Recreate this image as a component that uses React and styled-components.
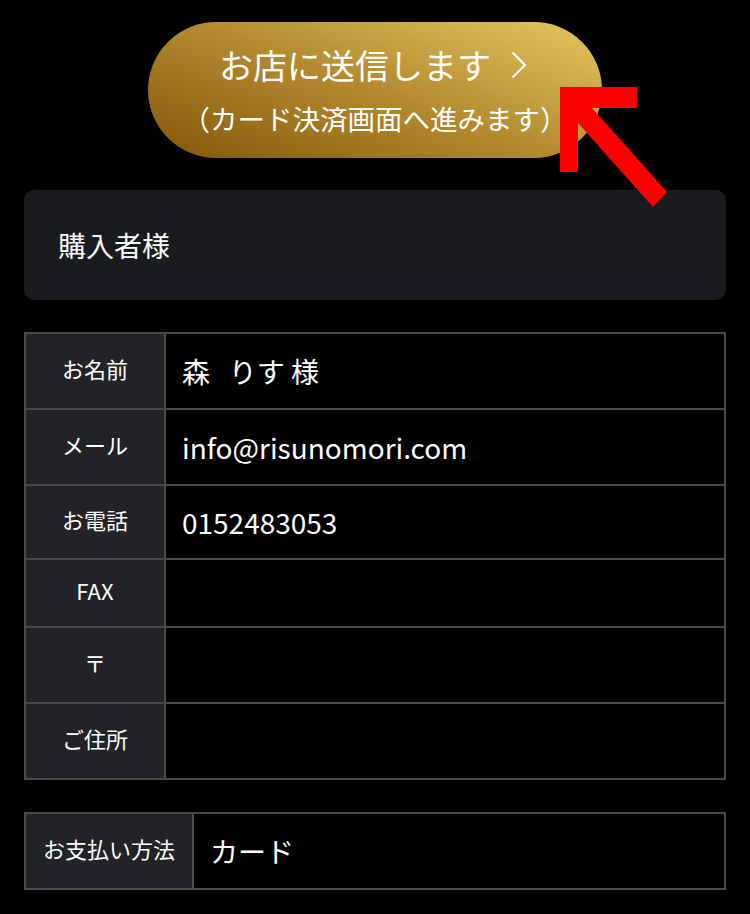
import styled, { createGlobalStyle } from 'styled-components';

const GlobalStyle = createGlobalStyle`
  html, body {
    margin: 0;
    padding: 0;
    background: #000;
  }
  body {
    font-family: 'Noto Sans CJK JP', 'Noto Sans', sans-serif;
    color: #fff;
  }
`;

const Page = styled.div`
  position: relative;
  width: 750px;
  box-sizing: border-box;
  padding: 22px 24px 25px;
  display: flex;
  flex-direction: column;
  gap: 32px;
`;

const SubmitButton = styled.button`
  align-self: center;
  width: 454px;
  height: 136px;
  border: none;
  border-radius: 68px;
  background: linear-gradient(20deg, #845709 0%, #b48a30 50%, #e5c75f 100%);
  color: #fff;
  font-family: inherit;
  display: flex;
  flex-direction: column;
  align-items: center;
  justify-content: center;
  gap: 15px;
  padding: 0 0 2px;
  cursor: pointer;
`;

const ButtonMain = styled.span`
  display: flex;
  align-items: center;
  font-size: 34px;
  line-height: 42px;
  margin-left: -4px;
  svg {
    margin-left: 20px;
  }
`;

const ButtonSub = styled.span`
  font-size: 27.5px;
  line-height: 34px;
`;

const Arrow = styled.svg`
  position: absolute;
  left: 0;
  top: 0;
  pointer-events: none;
`;

const SectionCard = styled.div`
  height: 110px;
  box-sizing: border-box;
  background: #1a1b1f;
  border-radius: 10px;
  padding: 0 34px;
  display: flex;
  align-items: center;
  font-size: 28px;
`;

const Table = styled.table`
  width: 100%;
  border-collapse: collapse;
  border: 2px solid #4a4a4a;
`;

const Row = styled.tr`
  height: ${(p) => p.$h}px;
`;

const Label = styled.th`
  width: ${(p) => (p.$auto ? '1%' : '20%')};
  white-space: nowrap;
  background: #212327;
  border: 2px solid #4a4a4a;
  font-weight: 400;
  font-size: 22px;
  text-align: center;
  vertical-align: middle;
  padding: 0 17px 7px;
`;

const Value = styled.td`
  border: 2px solid #4a4a4a;
  font-size: 28px;
  vertical-align: middle;
  padding: 0 16px;
`;

const buyer = [
  { label: 'お名前', value: '森\u00a0\u00a0\u00a0りす 様', h: 76 },
  { label: 'メール', value: 'info@risunomori.com', h: 76 },
  { label: 'お電話', value: '0152483053', h: 74 },
  { label: 'FAX', value: '', h: 68 },
  { label: '〒', value: '', h: 76 },
  { label: 'ご住所', value: '', h: 76 },
];

export default function App() {
  return (
    <>
      <GlobalStyle />
      <Page>
        <SubmitButton>
          <ButtonMain>
            お店に送信します
            <svg width="16" height="28" viewBox="0 0 16 28">
              <polyline
                points="1.5,1.5 14,14 1.5,26.5"
                fill="none"
                stroke="#fff"
                strokeWidth="2.2"
              />
            </svg>
          </ButtonMain>
          <ButtonSub>（カード決済画面へ進みます）</ButtonSub>
        </SubmitButton>

        <SectionCard>購入者様</SectionCard>

        <Table>
          <tbody>
            {buyer.map((r) => (
              <Row key={r.label} $h={r.h}>
                <Label>{r.label}</Label>
                <Value>{r.value}</Value>
              </Row>
            ))}
          </tbody>
        </Table>

        <Table>
          <tbody>
            <Row $h={76}>
              <Label $auto>お支払い方法</Label>
              <Value>カード</Value>
            </Row>
          </tbody>
        </Table>

        <Arrow width="750" height="220" viewBox="0 0 750 220">
          <polygon
            fill="#ff0000"
            points="560,87 637,87 637,108 592,108 667,192 653,207 578,123 578,172 560,172"
          />
        </Arrow>
      </Page>
    </>
  );
}
